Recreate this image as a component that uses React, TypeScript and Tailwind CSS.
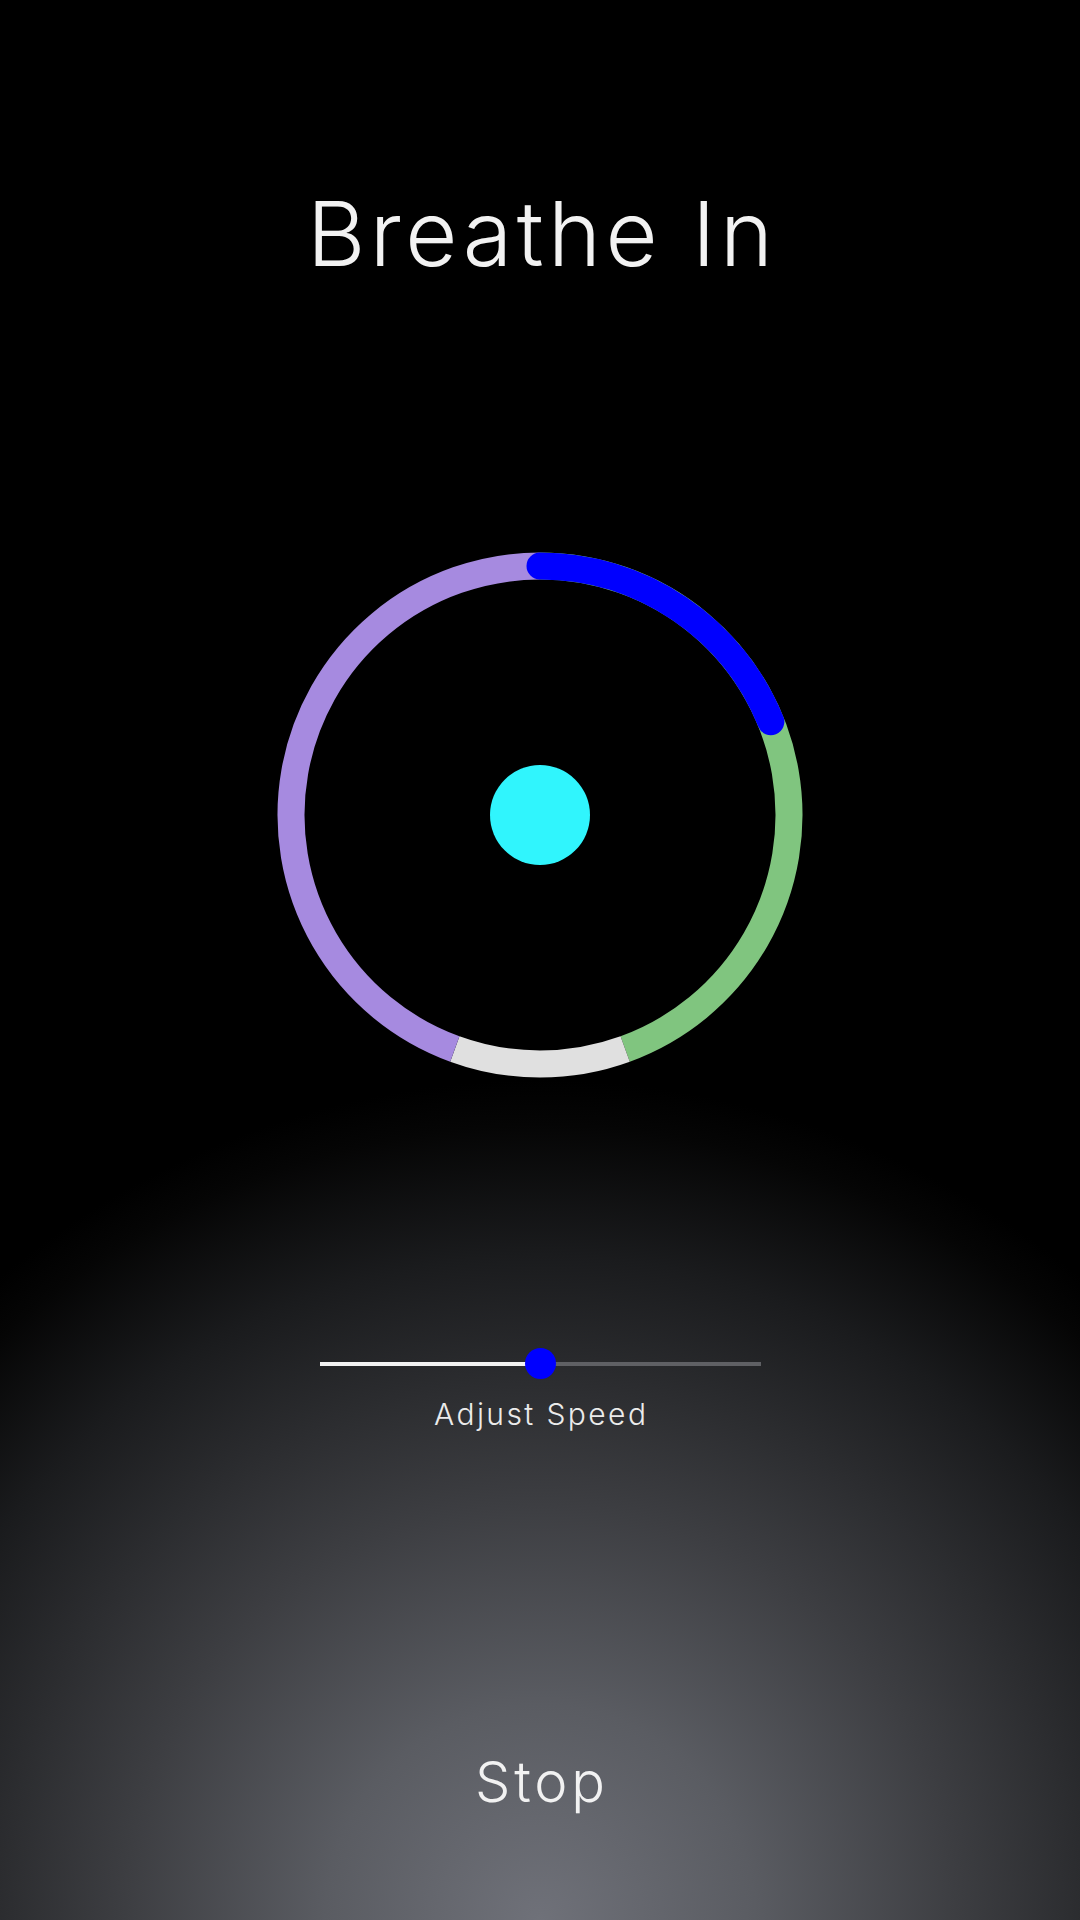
import React from "react";

const CX = 280;
const CY = 280;
const R = 249;

function pt(deg: number) {
  const a = (deg * Math.PI) / 180;
  return [CX + R * Math.sin(a), CY - R * Math.cos(a)];
}

function arc(start: number, end: number) {
  const [x1, y1] = pt(start);
  const [x2, y2] = pt(end);
  const large = end - start > 180 ? 1 : 0;
  return `M ${x1.toFixed(3)} ${y1.toFixed(3)} A ${R} ${R} 0 ${large} 1 ${x2.toFixed(3)} ${y2.toFixed(3)}`;
}

function Ring() {
  return (
    <svg width="560" height="560" viewBox="0 0 560 560" className="block">
      <path d={arc(0, 160)} fill="none" stroke="#80c57f" strokeWidth="27" />
      <path d={arc(160, 200)} fill="none" stroke="#e0e0e0" strokeWidth="27" />
      <path d={arc(200, 359.99)} fill="none" stroke="#a68ae0" strokeWidth="27" />
      <path d={arc(0, 68)} fill="none" stroke="#0000ff" strokeWidth="27" strokeLinecap="round" />
      <circle cx={CX} cy={CY} r="50" fill="#30f5fd" />
    </svg>
  );
}

export default function App() {
  return (
    <div
      className="w-[1080px] h-[1920px] overflow-hidden flex flex-col items-center bg-[radial-gradient(circle_at_50%_100%,#6f7179_0px,#5a5c62_215px,#3d3e42_415px,#1a1b1d_665px,#050505_795px,#000_840px)] text-[#f2f2f2]"
      style={{ fontFamily: "Inter, 'Noto Sans', sans-serif" }}
    >
      <div className="mt-[189px] h-[90px] pl-[4.5px] text-[90px] leading-[90px] tracking-[4.5px] font-light whitespace-nowrap">Breathe In</div>
      <div className="mt-[256px]">
        <Ring />
      </div>
      <div className="mt-[253px] relative w-[441px] h-[31px] flex items-center">
        <div className="w-[220px] h-[4px] bg-[#f2f2f2]" />
        <div className="flex-1 h-[4px] bg-[#5f6064]" />
        <div className="absolute left-[205px] top-0 w-[31px] h-[31px] rounded-full bg-[#0000ff]" />
      </div>
      <div className="mt-[20px] h-[30px] pl-[2.4px] text-[30px] leading-[30px] tracking-[2.4px] font-light whitespace-nowrap text-[#ebebeb]">Adjust Speed</div>
      <div className="mt-[325px] h-[56px] pl-[3.8px] text-[56px] leading-[56px] tracking-[3.8px] font-light whitespace-nowrap">Stop</div>
    </div>
  );
}
